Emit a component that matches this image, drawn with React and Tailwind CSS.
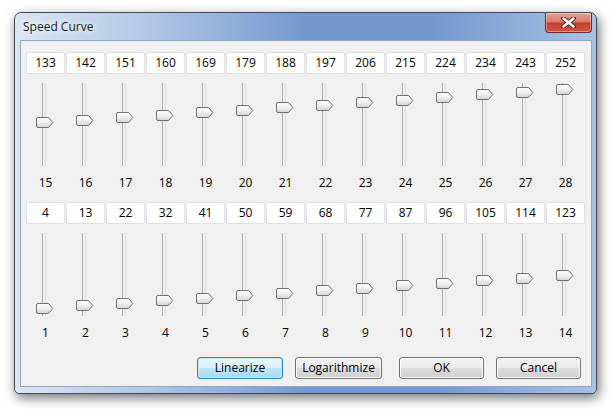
import React from 'react';

const topRow = [133, 142, 151, 160, 169, 179, 188, 197, 206, 215, 224, 234, 243, 252];
const bottomRow = [4, 13, 22, 32, 41, 50, 59, 68, 77, 87, 96, 105, 114, 123];

const Thumb = ({ top }) => (
  <svg className="absolute left-[10px]" style={{ top }} width="18" height="11" viewBox="0 0 18 11">
    <defs>
      <linearGradient id="thumbFill" x1="0" y1="0" x2="0" y2="1">
        <stop offset="0" stopColor="#fdfdfd" />
        <stop offset="0.5" stopColor="#eeeeee" />
        <stop offset="1" stopColor="#d4d4d4" />
      </linearGradient>
    </defs>
    <path
      d="M2 0.5 H12.5 L16.8 5.5 L12.5 10.5 H2 Q0.5 10.5 0.5 9 V2 Q0.5 0.5 2 0.5 Z"
      fill="url(#thumbFill)"
      stroke="#707070"
    />
  </svg>
);

const Channel = ({ value, label }) => (
  <div className="flex w-[40px] flex-col items-start">
    <div className="flex h-[22px] w-[39px] items-center justify-center rounded-[2px] border border-[#dde1e6] bg-white">
      {value}
    </div>
    <div className="relative mt-[9px] h-[83px] w-full">
      <div className="ml-[16px] h-full w-[4px] border-l border-r border-l-[#a9a9a9] border-r-[#dcdcdc] bg-[#f3f3f3]" />
      <Thumb top={71 - 0.276 * value} />
    </div>
    <div className="mt-[9px] h-[16px] w-[39px] text-center leading-[16px]">{label}</div>
  </div>
);

const Button = ({ children, primary, className = '' }) => (
  <button
    className={`h-[22px] rounded-[3px] border text-[12px] leading-none text-black ${
      primary
        ? 'border-[#3c7fb1] bg-[linear-gradient(#eaf6fd_0%,#d9f0fc_50%,#bee6fd_51%,#a7d9f5_100%)] shadow-[inset_0_0_0_1px_#c4e5f6]'
        : 'border-[#707070] bg-[linear-gradient(#f2f2f2_0%,#ebebeb_50%,#dddddd_51%,#cfcfcf_100%)] shadow-[inset_0_0_0_1px_#fcfcfc]'
    } ${className}`}
  >
    {children}
  </button>
);

export default function App() {
  return (
    <div
      className="h-[409px] w-[614px] overflow-hidden bg-white pl-[14px] pt-[12px] text-[12px] text-black"
      style={{ fontFamily: '"Open Sans", "Noto Sans", sans-serif' }}
    >
      {/* Fenêtre */}
      <div className="flex h-[382px] w-[583px] flex-col rounded-t-[7px] rounded-b-[5px] border border-[#3d4b5f] bg-[linear-gradient(90deg,#dbe5f2_0%,#b3c9e6_22%,#7598cf_50%,#7598cf_72%,#a9c2e4_100%)] shadow-[2px_4px_12px_rgba(0,0,0,0.55)]">
        {/* Barre de titre */}
        <div className="flex h-[27px] items-start">
          <div className="ml-[7px] mt-[6px] px-[1px] text-[12px] leading-[16px] text-[#1b1b1b] [text-shadow:0_0_6px_#ffffff,0_0_10px_#ffffff]">
            Speed Curve
          </div>
          <div className="ml-auto mr-[4px] flex h-[20px] w-[47px] items-center justify-center rounded-b-[4px] border border-t-0 border-[#6d2a28] bg-[linear-gradient(#e8a395_0%,#d77a6b_45%,#c2402e_55%,#d0583f_100%)] shadow-[inset_0_0_0_1px_rgba(255,255,255,0.35)]">
            <svg width="15" height="11" viewBox="0 0 15 11">
              <path d="M2 1 L13 10 M13 1 L2 10" stroke="#5a2522" strokeWidth="4.4" strokeLinecap="round" />
              <path d="M2.5 1.5 L12.5 9.5 M12.5 1.5 L2.5 9.5" stroke="#ffffff" strokeWidth="2.4" strokeLinecap="round" />
            </svg>
          </div>
        </div>

        {/* Zone client */}
        <div className="mb-[6px] ml-[5px] mr-[4px] flex flex-1 flex-col border border-[#8fa6c6] bg-[#f0f0f0] pl-[5px] pt-[11px]">
          <div className="flex">
            {topRow.map((v, i) => (
              <Channel key={i} value={v} label={i + 15} />
            ))}
          </div>
          <div className="mt-[11px] flex">
            {bottomRow.map((v, i) => (
              <Channel key={i} value={v} label={i + 1} />
            ))}
          </div>
          <div className="mt-[16px] flex">
            <Button primary className="ml-[171px] w-[86px]">Linearize</Button>
            <Button className="ml-[12px] w-[87px]">Logarithmize</Button>
            <Button className="ml-[17px] w-[85px]">OK</Button>
            <Button className="ml-[12px] w-[85px]">Cancel</Button>
          </div>
        </div>
      </div>
    </div>
  );
}
